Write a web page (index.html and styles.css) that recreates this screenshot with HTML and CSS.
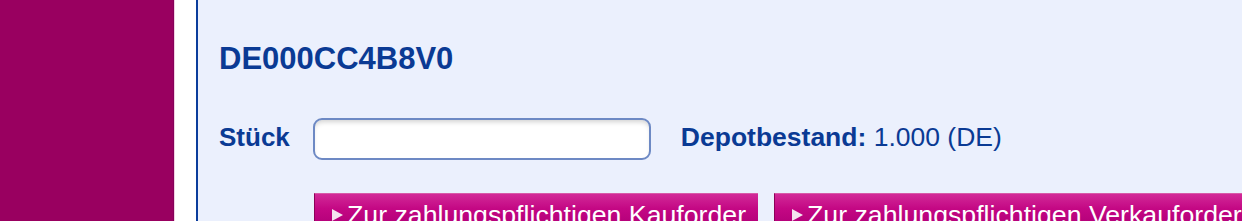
FILE: index.html
```html
<!DOCTYPE html>
<html lang="de">
<head>
<meta charset="utf-8">
<title>Order</title>
<link rel="stylesheet" href="styles.css">
</head>
<body>
<div class="page">
  <aside class="sidebar"></aside>
  <div class="spacer"></div>
  <main class="panel">
    <h2 class="isin">DE000CC4B8V0</h2>
    <div class="row">
      <label class="label" for="stueck">Stück</label>
      <input class="qty" id="stueck" type="text">
      <div class="holding"><span class="label">Depotbestand:</span> 1.000 (DE)</div>
    </div>
    <div class="buttons">
      <button class="btn" type="button"><span class="arrow"></span>Zur zahlungspflichtigen Kauforder</button>
      <button class="btn" type="button"><span class="arrow"></span>Zur zahlungspflichtigen Verkauforder</button>
    </div>
  </main>
</div>
</body>
</html>
```
FILE: styles.css
```css
html, body {
  margin: 0;
  padding: 0;
  height: 100%;
  overflow: hidden;
  background: #ffffff;
  font-family: "Liberation Sans", Arial, sans-serif;
}

.page {
  display: flex;
  height: 221px;
  width: 1242px;
  overflow: hidden;
}

.sidebar {
  flex: 0 0 173px;
  background: #990060;
  border-right: 1px solid #86005a;
}

.spacer {
  flex: 0 0 21px;
  background: #ffffff;
  border-left: 1px solid #f3cfe2;
}

.panel {
  flex: 1 1 auto;
  min-width: 0;
  background: #ebf0fd;
  border-left: 2px solid #0a3c9c;
  padding: 41px 0 0 21px;
  color: #0a3a94;
  white-space: nowrap;
}

.isin {
  margin: 0;
  font-size: 31px;
  line-height: 36px;
  font-weight: bold;
  color: #0a3a94;
}

.row {
  display: flex;
  align-items: flex-start;
  margin-top: 41px;
}

.label {
  font-size: 26px;
  line-height: 38px;
  font-weight: bold;
  color: #0a3a94;
}

.row > .label {
  margin-right: 23px;
}

.qty {
  box-sizing: border-box;
  width: 338px;
  height: 42px;
  margin: 0;
  border: 2px solid #6d89c4;
  border-radius: 9px;
  background: #ffffff;
  box-shadow: inset 0 4px 5px -2px rgba(0, 0, 0, 0.18);
  outline: none;
}

.holding {
  margin-left: 30px;
  font-size: 26.5px;
  line-height: 38px;
  color: #0a3a94;
}

.holding .label {
  font-size: 26.5px;
}

.buttons {
  display: flex;
  gap: 16px;
  margin-top: 33px;
  margin-left: 95px;
}

.btn {
  position: relative;
  flex: 0 0 auto;
  height: 42px;
  margin: 0;
  padding: 0 12px 0 32px;
  border: none;
  border-top: 1px solid #d85aa8;
  border-left: 1px solid #8c0058;
  background: linear-gradient(to bottom, #d22a98 0%, #c40884 35%, #b5007a 70%, #a8006f 100%);
  color: #ffffff;
  font-family: "Liberation Sans", Arial, sans-serif;
  font-size: 26.7px;
  line-height: 40px;
  white-space: nowrap;
  text-align: left;
}

.arrow {
  position: absolute;
  left: 17px;
  top: 15px;
  width: 0;
  height: 0;
  border-top: 6px solid transparent;
  border-bottom: 6px solid transparent;
  border-left: 11px solid #f4e6ef;
}
```
